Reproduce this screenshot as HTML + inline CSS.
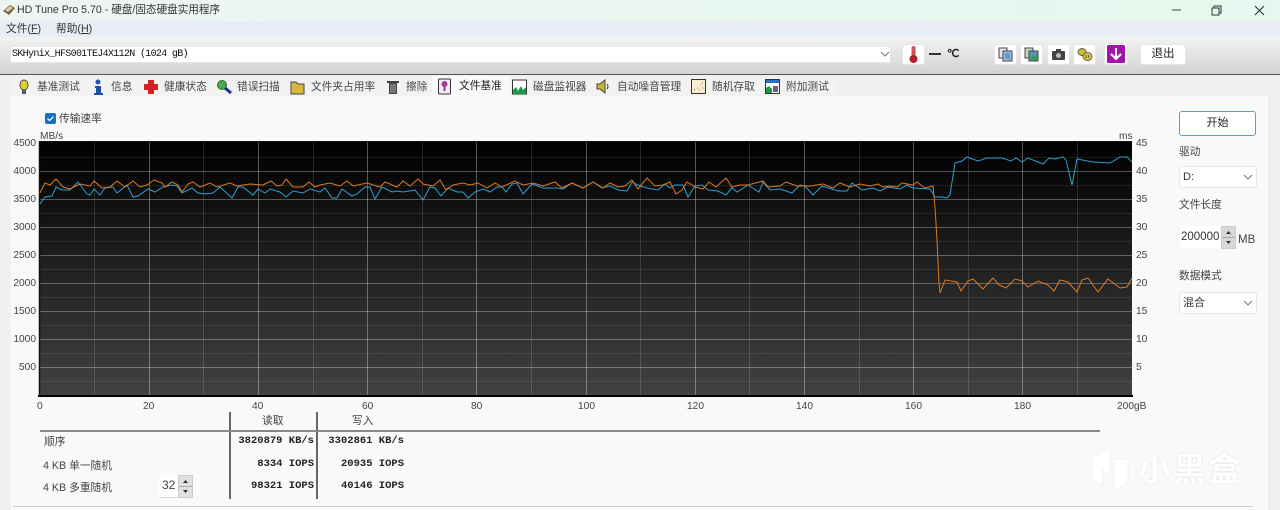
<!DOCTYPE html>
<html><head><meta charset="utf-8"><title>HD Tune Pro</title>
<style>
html,body{margin:0;padding:0;width:1280px;height:510px;overflow:hidden;background:#f0f0f0}
body{position:relative;font-family:"Liberation Sans","Noto Sans CJK SC",sans-serif;color:#333;font-size:11px;filter:blur(.3px)}
.a{position:absolute;white-space:nowrap;line-height:14px}
.b{position:absolute;background:#fff;border:1px solid #e6e6e6;border-radius:3px;box-sizing:border-box}
.m{font-family:"Liberation Mono",monospace;font-weight:bold;font-size:10.5px;color:#222;text-align:right}
.t{color:#444;font-size:10.7px}
.ax{font-size:10.2px;color:#444}
.ic{position:absolute}
</style></head><body>
<div style="position:absolute;left:0;top:0;width:1280px;height:21px;background:linear-gradient(90deg,#edf5f3,#e5f7ee)"></div>
<div style="position:absolute;left:0;top:21px;width:1280px;height:16px;background:linear-gradient(90deg,#e8edf3,#e9eef6)"></div>
<div style="position:absolute;left:0;top:37px;width:1280px;height:37px;background:linear-gradient(#f3f3f3,#d2d2d2)"></div>
<div style="position:absolute;left:0;top:74px;width:1280px;height:1px;background:#555"></div>
<div style="position:absolute;left:11px;top:96px;width:1257px;height:414px;background:#f9f9f9"></div>
<div style="position:absolute;left:11px;top:78px;width:825px;height:18px;background:#f2f2f2"></div>
<div style="position:absolute;left:432px;top:76px;width:78px;height:20px;background:#f9f9f9"></div>

<svg class="ic" style="left:2px;top:3px" width="14" height="14" viewBox="0 0 14 14"><path d="M1 8L8 2l5 3-6 7z" fill="#7a6240"/><path d="M3 7l5-4 3 2-5 4z" fill="#d8c9a8"/></svg>
<div class="a" style="left:17px;top:3px;font-size:10.6px;color:#333">HD Tune Pro 5.70 - 硬盘/固态硬盘实用程序</div>
<div class="a" style="left:6px;top:22px;color:#333;font-size:10.7px">文件(<u>F</u>)</div>
<div class="a" style="left:56px;top:22px;color:#333;font-size:10.7px">帮助(<u>H</u>)</div>
<svg class="ic" style="left:1165px;top:2px" width="112" height="18" viewBox="0 0 112 18"><path d="M7 8h9" stroke="#444" fill="none"/><path d="M47 6h7v7h-7zM49 6V4h7v7h-2" stroke="#333" fill="none"/><path d="M90 4l9 9M99 4l-9 9" stroke="#333" fill="none" stroke-width="1.1"/></svg>

<div style="position:absolute;left:10px;top:46px;width:881px;height:17px;background:#fff;border:1px solid #e6e6e6;box-sizing:border-box;border-radius:2px"></div>
<div class="a" style="left:12px;top:48px;font-family:'Liberation Mono',monospace;font-size:10px;letter-spacing:-.67px;color:#111">SKHynix_HFS001TEJ4X112N (1024 gB)</div>
<svg class="ic" style="left:880px;top:50px" width="10" height="8"><path d="M1 2l4 4 4-4" stroke="#777" fill="none"/></svg>

<div class="b" style="left:902px;top:44px;width:23px;height:21px"></div>
<svg class="ic" style="left:908px;top:45px" width="11" height="19" viewBox="0 0 11 19"><rect x="3.500" y="1" width="4" height="12" rx="2" fill="#c9545c"/><circle cx="5.500" cy="14" r="4" fill="#b3202c"/></svg>
<div style="position:absolute;left:929px;top:53px;width:12px;height:1.5px;background:#333"></div>
<div class="a" style="left:947px;top:47px;font-family:'Liberation Serif',serif;font-weight:bold;font-size:11px;color:#222">℃</div>

<div class="b" style="left:994px;top:44px;width:23px;height:21px"></div>
<div class="b" style="left:1020px;top:44px;width:23px;height:21px"></div>
<div class="b" style="left:1047px;top:44px;width:23px;height:21px"></div>
<div class="b" style="left:1073px;top:44px;width:23px;height:21px"></div>
<div class="b" style="left:1104px;top:43px;width:24px;height:22px"></div>
<svg class="ic" style="left:998px;top:47px" width="15" height="15"><path d="M1 1h8v10H1z" fill="#e4e8ee" stroke="#444"/><path d="M5 4h9v10H5z" fill="#9dbfe6" stroke="#444"/><path d="M7 7h5M7 9h5M7 11h5" stroke="#2a6fc0"/></svg>
<svg class="ic" style="left:1024px;top:47px" width="15" height="15"><path d="M1 1h8v10H1z" fill="#bcdcc0" stroke="#444"/><path d="M5 4h9v10H5z" fill="#5f8ec0" stroke="#444"/><path d="M6 13l3-5 2 2 2-3v6z" fill="#2f9f4a"/></svg>
<svg class="ic" style="left:1051px;top:48px" width="15" height="13"><rect x="1" y="3" width="13" height="9" rx="1" fill="#444"/><rect x="5" y="1" width="5" height="3" fill="#444"/><circle cx="7.500" cy="7.500" r="2.500" fill="#bbb"/></svg>
<svg class="ic" style="left:1077px;top:47px" width="16" height="15"><ellipse cx="5" cy="5" rx="4" ry="3.500" fill="#c9bd2c" stroke="#666"/><ellipse cx="10.500" cy="9.500" rx="4.500" ry="4" fill="#d3c72c" stroke="#666"/><path d="M9 8v3M11.500 8v3" stroke="#665"/></svg>
<svg class="ic" style="left:1107px;top:45px" width="18" height="18"><rect width="18" height="18" rx="1" fill="#a313a8"/><path d="M9 3v11M4 9l5 5 5-5" stroke="#fff" stroke-width="2" fill="none"/></svg>
<div class="b" style="left:1140px;top:44px;width:46px;height:21px;text-align:center;line-height:19px;font-size:11.5px;color:#222">退出</div>

<svg class="ic" style="left:17px;top:79px" width="14" height="17"><ellipse cx="7" cy="6" rx="4" ry="5" fill="#ded22a" stroke="#555"/><rect x="5" y="11" width="4" height="4" fill="#555"/></svg>
<div class="a t" style="left:37px;top:80px">基准测试</div>
<svg class="ic" style="left:91px;top:79px" width="14" height="17"><circle cx="7" cy="3" r="2.500" fill="#1f56b5"/><path d="M4 7h6v7h2v2H3v-2h2V9H4z" fill="#1c4fa8"/></svg>
<div class="a t" style="left:111px;top:80px">信息</div>
<svg class="ic" style="left:143px;top:79px" width="16" height="16"><path d="M5 1h6v4h4v6h-4v4H5v-4H1V5h4z" fill="#d42020"/></svg>
<div class="a t" style="left:164px;top:80px">健康状态</div>
<svg class="ic" style="left:216px;top:79px" width="17" height="16"><circle cx="6" cy="6" r="4.500" fill="#4ca84c" stroke="#2f6f2f"/><path d="M9 9l6 5" stroke="#1d2f8f" stroke-width="3"/></svg>
<div class="a t" style="left:237px;top:80px">错误扫描</div>
<svg class="ic" style="left:290px;top:79px" width="16" height="16"><path d="M1 3h5l2 2h6v10H1z" fill="#d8b83c" stroke="#444"/></svg>
<div class="a t" style="left:311px;top:80px">文件夹占用率</div>
<svg class="ic" style="left:386px;top:79px" width="14" height="16"><path d="M1 2h12v2H1zM3 4h8v11H3z" fill="#444"/><path d="M5 5v9M7 5v9M9 5v9" stroke="#aaa"/></svg>
<div class="a t" style="left:406px;top:80px">擦除</div>
<svg class="ic" style="left:437px;top:78px" width="15" height="17"><rect x="1.500" y="1" width="12" height="15" rx="1" fill="#eee" stroke="#333"/><circle cx="7.500" cy="6" r="3" fill="#a03ca0"/><path d="M7.500 8v5" stroke="#a03ca0" stroke-width="2"/></svg>
<div class="a" style="left:459px;top:79px;color:#222;font-size:10.7px">文件基准</div>
<svg class="ic" style="left:512px;top:79px" width="15" height="16"><rect x=".5" y="1" width="14" height="14" fill="#fff" stroke="#333"/><path d="M1 15V11l3-3 2 4 3-5 2 4 3-3v7z" fill="#1c9a4a"/></svg>
<div class="a t" style="left:533px;top:80px">磁盘监视器</div>
<svg class="ic" style="left:596px;top:79px" width="16" height="15"><path d="M1 5h3l5-4v13L4 10H1z" fill="#c9bb2c" stroke="#444"/><path d="M11 5q2 2.500 0 5" stroke="#333" fill="none"/></svg>
<div class="a t" style="left:617px;top:80px">自动噪音管理</div>
<svg class="ic" style="left:691px;top:79px" width="15" height="15"><rect x=".5" y=".5" width="14" height="14" fill="#f7efcf" stroke="#333"/><path d="M3 11h1M6 9h1M9 6h1M11 9h1M8 11h1M11 4h1" stroke="#b06030"/></svg>
<div class="a t" style="left:712px;top:80px">随机存取</div>
<svg class="ic" style="left:765px;top:79px" width="15" height="15"><rect x=".5" y=".5" width="14" height="14" fill="#fff" stroke="#333"/><path d="M1 1h13v3H1z" fill="#2a6fc0"/><path d="M1 14V9l3-2 3 3v4z" fill="#1c9a4a"/><path d="M8 7h5v6H8z" fill="#667"/></svg>
<div class="a t" style="left:786px;top:80px">附加测试</div>

<div style="position:absolute;left:45px;top:113px;width:11px;height:11px;background:#1a6fc0;border-radius:2px"></div>
<svg class="ic" style="left:45px;top:113px" width="11" height="11"><path d="M2.500 5.500l2 2 4-4" stroke="#fff" fill="none" stroke-width="1.200"/></svg>
<div class="a t" style="left:59px;top:112px">传输速率</div>

<div class="a ax" style="left:40px;top:130px">MB/s</div>
<div class="a ax" style="left:1119px;top:130px">ms</div>
<div class="a ax" style="right:1244px;top:137px">4500</div>
<div class="a ax" style="right:1244px;top:165px">4000</div>
<div class="a ax" style="right:1244px;top:193px">3500</div>
<div class="a ax" style="right:1244px;top:221px">3000</div>
<div class="a ax" style="right:1244px;top:249px">2500</div>
<div class="a ax" style="right:1244px;top:277px">2000</div>
<div class="a ax" style="right:1244px;top:305px">1500</div>
<div class="a ax" style="right:1244px;top:333px">1000</div>
<div class="a ax" style="right:1244px;top:361px">500</div>
<div class="a ax" style="left:1136px;top:137px">45</div>
<div class="a ax" style="left:1136px;top:165px">40</div>
<div class="a ax" style="left:1136px;top:193px">35</div>
<div class="a ax" style="left:1136px;top:221px">30</div>
<div class="a ax" style="left:1136px;top:249px">25</div>
<div class="a ax" style="left:1136px;top:277px">20</div>
<div class="a ax" style="left:1136px;top:305px">15</div>
<div class="a ax" style="left:1136px;top:333px">10</div>
<div class="a ax" style="left:1136px;top:361px">5</div>

<svg class="ic" style="left:38px;top:141px" width="1096" height="258" viewBox="38 141 1096 258">
<defs><linearGradient id="g" x1="0" y1="0" x2="0" y2="1"><stop offset="0" stop-color="#000"/><stop offset="1" stop-color="#424242"/></linearGradient></defs>
<rect x="40" y="142" width="1092" height="254" fill="url(#g)"/>
<g stroke-width="1" fill="none">
<path d="M40 157.500H1132M40 185.500H1132M40 213.500H1132M40 241.500H1132M40 269.500H1132M40 297.500H1132M40 325.500H1132M40 353.500H1132M40 381.500H1132" stroke="#fff" stroke-opacity=".09"/>
<path d="M40 171.500H1132M40 199.500H1132M40 227.500H1132M40 255.500H1132M40 283.500H1132M40 311.500H1132M40 339.500H1132M40 367.500H1132" stroke="#fff" stroke-opacity=".3"/>
<path d="M94.500 142V396M203.500 142V396M313.500 142V396M422.500 142V396M531.500 142V396M640.500 142V396M749.500 142V396M859.500 142V396M968.500 142V396M1077.500 142V396" stroke="#fff" stroke-opacity=".14"/>
<path d="M149.500 142V396M258.500 142V396M367.500 142V396M476.500 142V396M586.500 142V396M695.500 142V396M804.500 142V396M913.500 142V396M1022.500 142V396" stroke="#fff" stroke-opacity=".33"/>
</g>
<path d="M39.500 397V141.500H1132" stroke="#111" fill="none" stroke-width="1.500"/>
<path d="M38 396H1133" stroke="#000" stroke-width="2"/>
<polyline fill="none" stroke="#2f9fd0" stroke-width="1" points="40,204 45,197 52,196 56,187 62,190 70,190 78,182 87,194 90,195 94,189 100,195 105,188 113,187 117,193 127,185 133,197 138,196 148,189 155,192 163,187 172,185 177,186 182,193 192,188 198,193 205,194 213,193 220,187 232,198 238,187 243,187 253,195 258,189 265,193 270,189 280,192 286,197 293,191 303,193 310,189 320,192 325,188 332,198 337,198 342,189 352,196 357,194 365,187 370,187 375,199 382,187 392,192 397,191 403,192 415,190 423,200 430,187 435,188 441,196 448,188 457,192 463,192 468,198 475,192 483,189 490,192 497,187 502,187 506,192 512,184 517,183 523,194 532,184 543,188 558,188 563,189 572,183 583,188 593,182 602,188 610,186 618,190 627,191 632,182 640,186 647,188 658,190 665,184 670,188 675,185 683,185 688,197 695,186 702,185 708,190 718,191 726,195 732,188 737,192 748,185 759,192 763,182 770,190 780,189 792,193 800,185 805,186 813,195 822,186 838,191 847,191 852,183 862,190 873,188 880,191 888,187 900,189 907,185 913,188 930,189 935,197 942,197 947,198 950,195 955,163 962,161 967,157 978,161 987,158 1002,158 1011,161 1016,158 1022,162 1028,158 1043,164 1049,158 1055,159 1063,157 1066,160 1072,185 1077,159 1093,162 1110,163 1120,157 1127,157 1132,162"/>
<polyline fill="none" stroke="#d97a20" stroke-width="1" points="40,193 45,183 50,185 56,179 63,187 70,189 80,184 90,186 94,181 102,188 110,187 117,181 125,187 133,181 140,187 147,185 154,180 162,183 165,187 172,182 178,185 182,192 188,184 193,182 200,187 210,183 217,187 230,183 237,186 250,184 263,185 271,181 277,186 282,185 286,179 293,187 303,187 309,182 315,187 320,185 330,183 340,186 347,181 353,186 367,183 380,187 385,182 397,187 403,181 410,186 418,179 423,184 433,186 440,180 446,190 453,185 463,183 470,185 478,183 487,188 495,183 502,187 515,181 523,185 533,183 543,186 555,182 562,188 572,183 583,188 593,182 603,188 610,183 618,187 625,186 632,180 638,189 647,178 655,186 663,185 670,182 676,194 682,190 687,182 695,187 703,189 709,182 716,187 726,178 732,187 740,185 748,185 763,181 768,187 780,186 786,182 797,186 810,186 823,184 833,188 840,183 850,187 860,184 870,186 878,184 883,187 890,186 897,187 902,183 913,185 917,182 925,188 933,186 935,207 937,240 939,283 940,293 945,280 957,282 961,291 968,281 973,279 983,289 993,278 999,285 1006,288 1015,279 1022,281 1028,287 1038,281 1048,285 1054,291 1060,280 1068,282 1077,292 1082,280 1088,278 1098,292 1108,279 1120,288 1127,287 1132,278"/>
</svg>

<div class="a ax" style="left:37px;top:400px">0</div>
<div class="a ax" style="left:143px;top:400px">20</div>
<div class="a ax" style="left:252px;top:400px">40</div>
<div class="a ax" style="left:362px;top:400px">60</div>
<div class="a ax" style="left:471px;top:400px">80</div>
<div class="a ax" style="left:578px;top:400px">100</div>
<div class="a ax" style="left:687px;top:400px">120</div>
<div class="a ax" style="left:796px;top:400px">140</div>
<div class="a ax" style="left:905px;top:400px">160</div>
<div class="a ax" style="left:1014px;top:400px">180</div>
<div class="a ax" style="left:1117px;top:400px">200gB</div>

<div style="position:absolute;left:229px;top:412px;width:2px;height:87px;background:#666"></div>
<div style="position:absolute;left:316px;top:412px;width:2px;height:87px;background:#666"></div>
<div style="position:absolute;left:40px;top:430px;width:1060px;height:2px;background:#888"></div>
<div class="a t" style="left:262px;top:414px">读取</div>
<div class="a t" style="left:352px;top:414px">写入</div>
<div class="a t" style="left:44px;top:435px">顺序</div>
<div class="a t" style="left:43px;top:459px">4 KB 单一随机</div>
<div class="a t" style="left:43px;top:481px">4 KB 多重随机</div>
<div class="a m" style="left:214px;width:100px;top:434px">3820879 KB/s</div>
<div class="a m" style="left:304px;width:100px;top:434px">3302861 KB/s</div>
<div class="a m" style="left:214px;width:100px;top:457px">8334 IOPS</div>
<div class="a m" style="left:304px;width:100px;top:457px">20935 IOPS</div>
<div class="a m" style="left:214px;width:100px;top:479px">98321 IOPS</div>
<div class="a m" style="left:304px;width:100px;top:479px">40146 IOPS</div>

<div style="position:absolute;left:159px;top:475px;width:19px;height:22px;background:#fff;border-bottom:1px solid #ddd"></div>
<div class="a" style="left:162px;top:478px;font-size:12px;color:#444">32</div>
<svg class="ic" style="left:178px;top:475px" width="15" height="23"><rect x=".5" y=".5" width="14" height="22" fill="#e0e0e0" stroke="#ccc"/><path d="M1 11.500H14" stroke="#aaa"/><path d="M5 8l2.500-3L10 8z M5 15l2.500 3L10 15z" fill="#333"/></svg>

<div style="position:absolute;left:13px;top:506px;width:1240px;height:1px;background:#ccc"></div>

<div class="b" style="left:1179px;top:111px;width:77px;height:25px;border:1.5px solid #5aa0c4;text-align:center;line-height:22px;font-size:11px;color:#222">开始</div>
<div class="a t" style="left:1179px;top:145px">驱动</div>
<div class="b" style="left:1179px;top:166px;width:78px;height:22px;line-height:20px;padding-left:3px;color:#333">D:</div>
<svg class="ic" style="left:1243px;top:173px" width="10" height="8"><path d="M1 2l4 4 4-4" stroke="#777" fill="none"/></svg>
<div class="a t" style="left:1179px;top:198px">文件长度</div>
<div style="position:absolute;left:1180px;top:226px;width:41px;height:22px;background:#fff"></div>
<div class="a" style="left:1181px;top:230px;font-size:11.500px;color:#333">200000</div>
<svg class="ic" style="left:1221px;top:226px" width="15" height="23"><rect x=".5" y=".5" width="14" height="22" fill="#d8d8d8" stroke="#ccc"/><path d="M1 11.500H14" stroke="#aaa"/><path d="M5 8l2.500-3L10 8z M5 15l2.500 3L10 15z" fill="#333"/></svg>
<div class="a" style="left:1238px;top:233px;font-size:11.500px;color:#444">MB</div>
<div class="a t" style="left:1179px;top:269px">数据模式</div>
<div class="b" style="left:1179px;top:292px;width:78px;height:22px;line-height:20px;padding-left:3px;color:#333">混合</div>
<svg class="ic" style="left:1243px;top:299px" width="10" height="8"><path d="M1 2l4 4 4-4" stroke="#777" fill="none"/></svg>

<svg class="ic" style="left:1088px;top:445px" width="45" height="52" viewBox="0 0 45 52"><path d="M22 2L4 13v22l11 6V25l7 4V13zM26 13v30l-4 5 18-11V15z" fill="#fff" stroke="#e8e8e8" stroke-width=".5"/></svg>
<div class="a" style="left:1138px;top:453px;font-size:33px;line-height:34px;font-weight:bold;color:#fff;text-shadow:0 0 2px #ddd;letter-spacing:2px">小黑盒</div>
</body></html>
